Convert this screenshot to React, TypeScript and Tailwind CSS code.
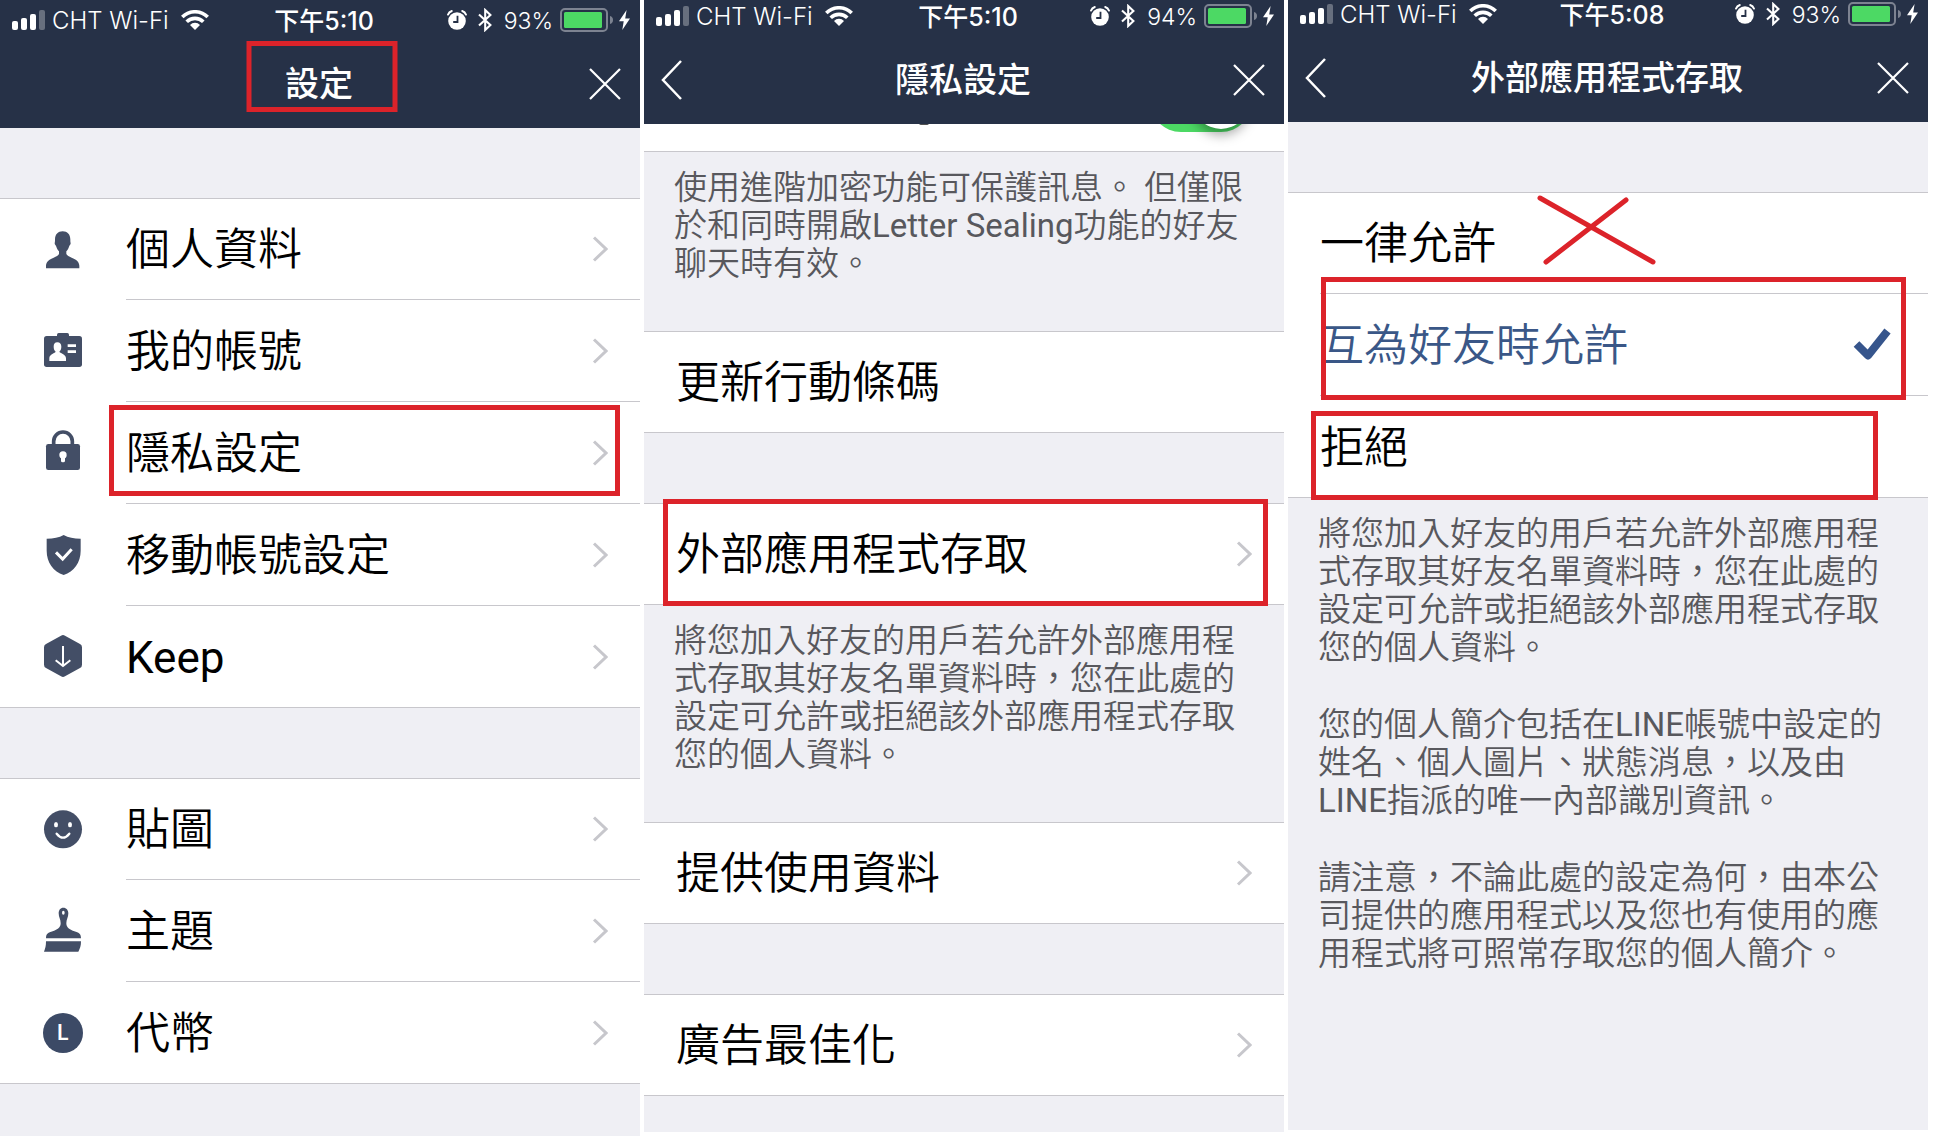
import React, { useState } from "react";

/* ---------- icons ---------- */

function Signal() {
  return (
    <svg width="33" height="20" viewBox="0 0 33 20" fill="#fff" aria-hidden="true">
      <rect x="0" y="11" width="6" height="9" rx="2" />
      <rect x="9" y="8" width="6" height="12" rx="2" />
      <rect x="18" y="4" width="6" height="16" rx="2" />
      <rect x="27" y="0" width="6" height="20" rx="2" opacity="0.3" />
    </svg>
  );
}

function Wifi() {
  return (
    <svg width="28" height="20" viewBox="0 0 28 20" aria-hidden="true">
      <g fill="none" stroke="#fff" strokeWidth="3.6">
        <path d="M1.3 7a18 18 0 0 1 25.4 0" />
        <path d="M5.700 11.800a11.700 11.700 0 0 1 16.600 0" />
      </g>
      <path d="M14 20l-5-5.100a7 7 0 0 1 10 0z" fill="#fff" />
    </svg>
  );
}

function Alarm() {
  return (
    <svg width="20" height="20" viewBox="0 0 20 20" aria-hidden="true">
      <circle cx="10" cy="11" r="8.8" fill="#fff" />
      <path d="M10.500 5.800V12H6.200" fill="none" stroke="#263147" strokeWidth="1.8" />
      <path d="M1 4.600A6 6 0 0 1 4.800 1M19 4.600A6 6 0 0 0 15.200 1" fill="none" stroke="#fff" strokeWidth="1.9" strokeLinecap="round" />
    </svg>
  );
}

function Bluetooth() {
  return (
    <svg width="14" height="24" viewBox="0 0 14 24" fill="none" stroke="#fff" strokeWidth="2.1" aria-hidden="true">
      <path d="M1 6.500l11.400 10.600L7.200 22V2l5.200 4.900L1 17.500" />
    </svg>
  );
}

function Battery() {
  return (
    <svg width="53" height="24" viewBox="0 0 53 24" aria-hidden="true">
      <rect x="1" y="1" width="46" height="22" rx="4" fill="none" stroke="#7d8391" strokeWidth="2" />
      <rect x="4" y="4" width="38" height="16" rx="1.5" fill="#4cd964" />
      <path d="M50 8c2 .6 3 2 3 4s-1 3.400-3 4z" fill="#7d8391" />
    </svg>
  );
}

function Bolt() {
  return (
    <svg width="11" height="20" viewBox="0 0 11 20" fill="#fff" aria-hidden="true">
      <path d="M7.600 0L0 11.200h4.700L3.300 20 11 8.400H6.200z" />
    </svg>
  );
}

function Chevron() {
  return (
    <svg className="shrink-0" width="16" height="26" viewBox="0 0 16 26" fill="none" stroke="#c7c7cc" strokeWidth="3" aria-hidden="true">
      <path d="M2 1.500L14 13 2 24.500" />
    </svg>
  );
}

const INK = "#434e66";

function Glyph({ children }: { children: React.ReactNode }) {
  return (
    <svg className="overflow-visible" width="44" height="44" viewBox="0 0 132 132" fill={INK} aria-hidden="true">
      {children}
    </svg>
  );
}

const PersonIcon = () => (
  <Glyph>
    <path d="M65 10c14 0 23 9 23 24 0 5 0 8 1 12 0 5-4 6-5 10-2 7-5 11-8 14v8c2 4 8 8 16 11 14 5 23 13 23 24v8H15v-8c0-11 9-19 23-24 8-3 14-7 16-11v-8c-3-3-6-7-8-14-1-4-5-5-5-10 1-4 1-7 1-12 0-15 9-24 23-24z" />
  </Glyph>
);

const CardIcon = () => (
  <Glyph>
    <rect x="9" y="21" width="114" height="93" rx="8" />
    <rect x="48" y="12" width="36" height="20" rx="5" />
    <path d="M49 40c8 0 12 5 12 13 0 7-2 11-6 15 1 5 20 6 20 20v8H25v-8c0-14 18-15 19-20-4-4-6-8-6-15 0-8 3-13 11-13zM80 46h25v8H80zM80 64h25v8H80z" fill="#fff" />
  </Glyph>
);

const LockIcon = () => (
  <Glyph>
    <rect x="15" y="39" width="102" height="78" rx="7" />
    <path d="M38 44V31a28 28 0 0 1 56 0v13" fill="none" stroke={INK} strokeWidth="11" />
    <circle cx="66" cy="72" r="11" fill="#fff" />
    <rect x="60" y="76" width="12" height="18" rx="5" fill="#fff" />
  </Glyph>
);

const ShieldIcon = () => (
  <Glyph>
    <path d="M68 6c14 8 30 11 51 11v36c0 36-20 62-51 73-31-11-51-37-51-73V17c21 0 37-3 51-11z" />
    <path d="M45 58l20 20 27-29" fill="none" stroke="#fff" strokeWidth="9" />
  </Glyph>
);

const KeepIcon = () => (
  <Glyph>
    <path d="M60 2q6-4 12 0l45 25q6 3 6 10v52q0 7-6 10l-45 25q-6 4-12 0L15 99q-6-3-6-10V37q0-7 6-10z" />
    <path d="M66 33v59M44 76l22 17 22-17" fill="none" stroke="#fff" strokeWidth="6" />
  </Glyph>
);

const SmileIcon = () => (
  <Glyph>
    <circle cx="66" cy="64" r="57" />
    <ellipse cx="45" cy="50" rx="6" ry="8" fill="#fff" />
    <ellipse cx="87" cy="50" rx="6" ry="8" fill="#fff" />
    <path d="M47 77q19 24 38 0" fill="none" stroke="#fff" strokeWidth="7" strokeLinecap="round" />
  </Glyph>
);

const BrushIcon = () => (
  <Glyph>
    <path d="M67-4c9 0 15 7 15 17 0 12-6 18-6 30 0 14 12 20 24 24 13 4 20 7 20 21H15c0-14 7-17 20-21 12-4 24-10 24-24 0-12-6-18-6-30 0-10 5-17 14-17z" />
    <path d="M15 97h105c0 14-3 22-8 31H9c4-9 6-17 6-31z" />
    <ellipse cx="67" cy="11" rx="4" ry="6" fill="#fff" />
  </Glyph>
);

const CoinIcon = () => (
  <span className="flex h-10 w-10 items-center justify-center rounded-full bg-[#3c4a66] font-[Inter] text-[21px] leading-none font-semibold text-white">
    L
  </span>
);

/* ---------- shared parts ---------- */

function Header({
  title,
  time,
  battery,
  height,
  back = false,
  marked = false,
}: {
  title: string;
  time: string;
  battery: string;
  height: string;
  back?: boolean;
  marked?: boolean;
}) {
  return (
    <header className={`flex flex-col justify-end overflow-hidden bg-[#263147] text-white ${height}`}>
      <div className="grid h-10 shrink-0 grid-cols-[1fr_auto_1fr] items-center px-[10px] font-[Inter,'Noto_Sans_CJK_TC',sans-serif] text-[24px] leading-8 font-light whitespace-nowrap">
        <div className="flex items-center pl-0.5">
          <Signal />
          <span className="ml-[7px] pt-0.5">CHT Wi-Fi</span>
          <span className="ml-3">
            <Wifi />
          </span>
        </div>
        <span className="pt-0.5 pl-2 text-[25px] font-medium">{time}</span>
        <div className="flex items-center justify-end">
          <Alarm />
          <span className="ml-[11px]">
            <Bluetooth />
          </span>
          <span className="mr-[7px] ml-3 pt-0.5 text-[23px]">{battery}</span>
          <Battery />
          <span className="ml-1.5">
            <Bolt />
          </span>
        </div>
      </div>
      <div className="relative grid h-[88px] shrink-0 grid-cols-[1fr_auto_1fr] items-center pr-[19px] pl-[17px]">
        <div className="flex">
          {back && (
            <button type="button" aria-label="返回">
              <svg width="21" height="40" viewBox="0 0 21 40" fill="none" stroke="#fff" strokeWidth="2.500">
                <path d="M20 1L2 20l18 19" />
              </svg>
            </button>
          )}
        </div>
        <h1 className="text-[34px] leading-[48px] font-medium">{title}</h1>
        <div className="flex justify-end">
          <button type="button" aria-label="關閉">
            <svg width="32" height="32" viewBox="0 0 32 32" fill="none" stroke="#fff" strokeWidth="2.200">
              <path d="M1 1l30 30M31 1L1 31" />
            </svg>
          </button>
        </div>
        {marked && <Mark className="top-px left-1/2 ml-0.5 h-[71px] w-[151px] -translate-x-1/2" />}
      </div>
    </header>
  );
}

function Mark({ className }: { className: string }) {
  return <span aria-hidden="true" className={`pointer-events-none absolute z-10 border-[5px] border-[#dc232a] ${className}`} />;
}

function Gap() {
  return <div className="h-[70px]" />;
}

function Note({ children, className = "" }: { children: React.ReactNode; className?: string }) {
  return <div className={`pt-[17px] pr-10 pl-[30px] text-[33px] leading-[38px] whitespace-nowrap text-[#58585d] ${className}`}>{children}</div>;
}

/* Latin words need a heavier cut than the demi-light Chinese text around them */
function Latin({ children }: { children: React.ReactNode }) {
  return <span className="font-normal">{children}</span>;
}

function IconRow({ icon, label, marked, edge }: { icon: React.ReactNode; label: React.ReactNode; marked?: boolean; edge?: "first" | "last" }) {
  const size =
    edge === "last" ? "h-[101px]" : edge === "first" ? "h-[101px] border-b border-[#c8c7cc]" : "h-[102px] border-b border-[#c8c7cc]";
  return (
    <li className={edge === "last" ? "relative border-b border-[#c8c7cc]" : "relative"}>
      <a href="#" className="flex items-stretch">
        <span className="flex w-[126px] shrink-0 items-center justify-center">{icon}</span>
        <span className={`flex flex-1 items-center justify-between pr-8 ${size}`}>
          <span className="pt-0.5 text-[44px] leading-[64px]">{label}</span>
          <Chevron />
        </span>
      </a>
      {marked && <Mark className="top-[3px] right-5 bottom-2 left-[109px]" />}
    </li>
  );
}

function PlainRow({ label, chevron = true, marked }: { label: string; chevron?: boolean; marked?: boolean }) {
  return (
    <div className="relative border-y border-[#c8c7cc] bg-white">
      <a href="#" className="flex h-[100px] items-center justify-between px-8">
        <span className="pt-0.5 text-[44px] leading-[64px]">{label}</span>
        {chevron && <Chevron />}
      </a>
      {marked && <Mark className="-top-[5px] right-4 -bottom-0.5 left-[19px]" />}
    </div>
  );
}

/* ---------- screens ---------- */

function SettingsScreen() {
  return (
    <section className="min-w-0 flex-1 bg-[#efeff4]">
      <Header title="設定" time="下午5:10" battery="93%" height="h-32" marked />
      <Gap />
      <ul className="border-t border-[#c8c7cc] bg-white">
        <IconRow icon={<PersonIcon />} label="個人資料" edge="first" />
        <IconRow icon={<CardIcon />} label="我的帳號" />
        <IconRow icon={<LockIcon />} label="隱私設定" marked />
        <IconRow icon={<ShieldIcon />} label="移動帳號設定" />
        <IconRow icon={<KeepIcon />} label={<Latin>Keep</Latin>} edge="last" />
      </ul>
      <Gap />
      <ul className="border-t border-[#c8c7cc] bg-white">
        <IconRow icon={<SmileIcon />} label="貼圖" edge="first" />
        <IconRow icon={<BrushIcon />} label="主題" />
        <IconRow icon={<CoinIcon />} label="代幣" edge="last" />
      </ul>
    </section>
  );
}

function PrivacyScreen() {
  return (
    <section className="mb-1 min-w-0 flex-1 bg-[#efeff4]">
      <Header title="隱私設定" time="下午5:10" battery="94%" height="h-[124px]" back />
      {/* Row scrolled almost entirely beneath the header */}
      <div className="flex h-7 flex-col justify-end overflow-hidden border-b border-[#c8c7cc] bg-white">
        <label className="relative flex h-[101px] shrink-0 items-center justify-end pr-8">
          <span className="absolute bottom-[26px] left-[275px] h-0.5 w-2.5 rounded-b-full bg-neutral-600" />
          <input type="checkbox" role="switch" aria-label="Letter Sealing" defaultChecked className="sr-only" />
          <span className="flex h-[62px] w-[102px] justify-end rounded-full bg-[#4cd964] p-[3px]">
            <span className="h-14 w-14 rounded-full bg-white shadow-[0_6px_12px_rgba(0,0,0,0.35)]" />
          </span>
        </label>
      </div>
      <Note className="h-[179px]">
        <p>
          使用進階加密功能可保護訊息。 但僅限
          <br />
          於和同時開啟<Latin>Letter Sealing</Latin>功能的好友
          <br />
          聊天時有效。
        </p>
      </Note>
      <PlainRow label="更新行動條碼" chevron={false} />
      <Gap />
      <PlainRow label="外部應用程式存取" marked />
      <Note className="h-[217px]">
        <p>
          將您加入好友的用戶若允許外部應用程
          <br />
          式存取其好友名單資料時，您在此處的
          <br />
          設定可允許或拒絕該外部應用程式存取
          <br />
          您的個人資料。
        </p>
      </Note>
      <PlainRow label="提供使用資料" />
      <Gap />
      <PlainRow label="廣告最佳化" />
    </section>
  );
}

const OPTIONS = [
  { label: "一律允許", size: "h-[101px] border-b border-[#c8c7cc]", mark: "" },
  { label: "互為好友時允許", size: "h-[102px] border-b border-[#c8c7cc]", mark: "-top-[17px] right-[22px] -bottom-1 left-[33px]" },
  { label: "拒絕", size: "h-[101px]", mark: "top-[15px] right-[50px] -bottom-[3px] left-[23px]" },
];

function AccessScreen() {
  const [selected, setSelected] = useState(1);
  return (
    <section className="mb-1.5 min-w-0 flex-1 bg-[#efeff4]">
      <Header title="外部應用程式存取" time="下午5:08" battery="93%" height="h-[122px]" back />
      <Gap />
      <div role="radiogroup" aria-label="外部應用程式存取" className="border-y border-[#c8c7cc] bg-white">
        {OPTIONS.map((option, i) => (
          <div key={option.label} className="relative pl-8">
            <label className={`flex items-center justify-between pr-[37px] ${option.size} ${i === selected ? "text-[#3a5787]" : "text-black"}`}>
              <input type="radio" name="access" className="sr-only" checked={i === selected} onChange={() => setSelected(i)} />
              <span className="pt-0.5 text-[44px] leading-[64px]">{option.label}</span>
              {i === selected && (
                <svg width="38" height="34" viewBox="0 0 38 34" fill="none" stroke="#36558c" strokeWidth="8" aria-hidden="true">
                  <path d="M3.500 16L15 27.500 34.500 3" strokeLinejoin="round" />
                </svg>
              )}
            </label>
            {option.mark && <Mark className={option.mark} />}
            {i === 0 && (
              <svg
                className="pointer-events-none absolute top-0.5 left-[249px]"
                width="120"
                height="70"
                viewBox="0 0 120 70"
                stroke="#dc232a"
                strokeWidth="5"
                strokeLinecap="round"
                aria-hidden="true"
              >
                <path d="M3 3l113 64M89 5L9 67" />
              </svg>
            )}
          </div>
        ))}
      </div>
      <Note>
        <p>
          將您加入好友的用戶若允許外部應用程
          <br />
          式存取其好友名單資料時，您在此處的
          <br />
          設定可允許或拒絕該外部應用程式存取
          <br />
          您的個人資料。
        </p>
        <p className="mt-[39px]">
          您的個人簡介包括在<Latin>LINE</Latin>帳號中設定的
          <br />
          姓名、個人圖片、狀態消息，以及由
          <br />
          <Latin>LINE</Latin>指派的唯一內部識別資訊。
        </p>
        <p className="mt-[39px]">
          請注意，不論此處的設定為何，由本公
          <br />
          司提供的應用程式以及您也有使用的應
          <br />
          用程式將可照常存取您的個人簡介。
        </p>
      </Note>
    </section>
  );
}

export default function App() {
  return (
    <main
      lang="zh-Hant"
      className="flex min-h-screen items-stretch gap-1 bg-white pr-2 font-[Roboto,'Noto_Sans_CJK_TC',sans-serif] font-[350] text-black"
    >
      <SettingsScreen />
      <PrivacyScreen />
      <AccessScreen />
    </main>
  );
}
